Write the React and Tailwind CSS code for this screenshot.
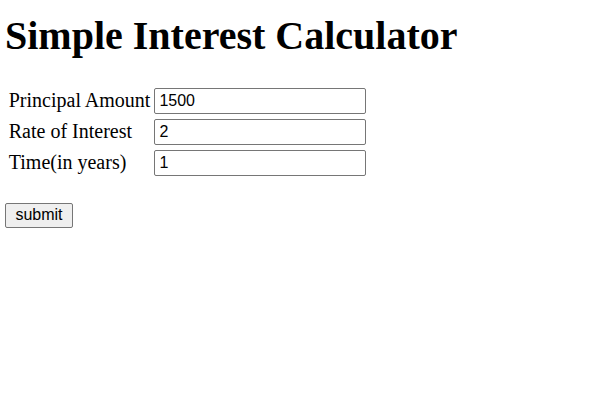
import React from 'react';

const serif = "font-['Liberation_Serif',_'Times_New_Roman',_serif]";
const sans = "font-['Liberation_Sans',_Arial,_sans-serif]";

const fields = [
  { label: 'Principal Amount', value: '1500' },
  { label: 'Rate of Interest', value: '2' },
  { label: 'Time(in years)', value: '1' },
];

export default function App() {
  return (
    <div className={`min-h-[420px] w-[600px] bg-white px-[5px] text-black ${serif}`}>
      <h1 className="pt-[14px] text-[40px] font-bold leading-[44px]">Simple Interest Calculator</h1>
      <form className="mt-[26px]">
        <div className="inline-grid grid-cols-[auto_auto] gap-x-[1.5px] gap-y-[2.5px] p-[2.5px]">
          {fields.map((f, idx) => (
            <React.Fragment key={idx}>
              <div className="flex items-center p-[1.25px] text-[20px] leading-[23px]">{f.label}</div>
              <div className="flex items-center p-[1.25px]">
                <input
                  type="text"
                  defaultValue={f.value}
                  className={`h-[26px] w-[212px] rounded-[2px] border border-[#767676] bg-white px-[4px] text-[16px] text-black ${sans}`}
                />
              </div>
            </React.Fragment>
          ))}
        </div>
        <div className="mt-[23px]">
          <button
            type="button"
            className={`h-[25px] w-[68px] rounded-[2px] border border-[#767676] bg-[#efefef] text-[16px] leading-none text-black ${sans}`}
          >
            submit
          </button>
        </div>
      </form>
    </div>
  );
}
